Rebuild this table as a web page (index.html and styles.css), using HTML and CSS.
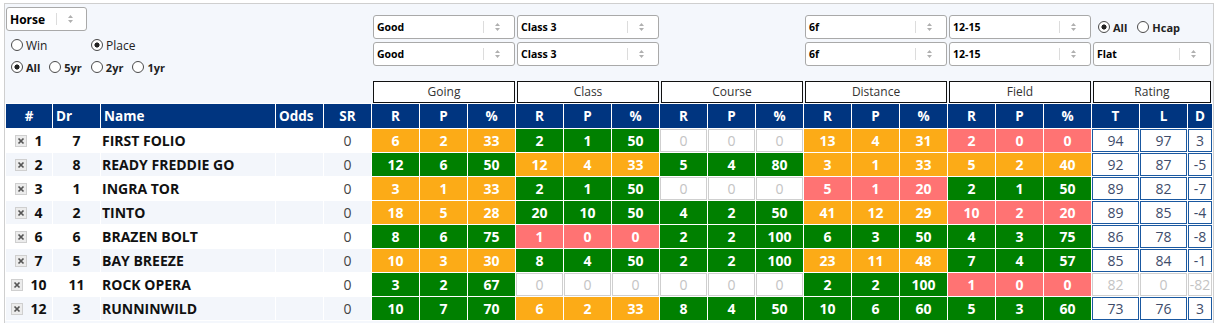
FILE: index.html
```html
<!DOCTYPE html>
<html>
<head>
<meta charset="utf-8">
<link rel="stylesheet" href="styles.css">
</head>
<body>
<div class="panel">
  <div class="top">
    <div class="left">
      <div class="sel sel-horse"><span class="sel-txt">Horse</span><span class="sel-arr"><svg width="7" height="10" viewBox="0 0 7 10"><path d="M1 4 L3.5 1 L6 4Z M1 6 L3.5 9 L6 6Z" fill="#b0b0b0"/></svg></span></div>
      <div class="radrow r1">
        <label class="rad w80"><span class="dot"></span>Win</label>
        <label class="rad"><span class="dot on"></span>Place</label>
      </div>
      <div class="radrow r2">
        <label class="rad"><span class="dot on"></span>All</label>
        <label class="rad"><span class="dot"></span>5yr</label>
        <label class="rad"><span class="dot"></span>2yr</label>
        <label class="rad"><span class="dot"></span>1yr</label>
      </div>
    </div>
    <div class="col">
      <div class="sel"><span class="sel-txt">Good</span><span class="sel-arr"><svg width="7" height="10" viewBox="0 0 7 10"><path d="M1 4 L3.5 1 L6 4Z M1 6 L3.5 9 L6 6Z" fill="#b0b0b0"/></svg></span></div>
      <div class="sel"><span class="sel-txt">Good</span><span class="sel-arr"><svg width="7" height="10" viewBox="0 0 7 10"><path d="M1 4 L3.5 1 L6 4Z M1 6 L3.5 9 L6 6Z" fill="#b0b0b0"/></svg></span></div>
    </div>
    <div class="col">
      <div class="sel"><span class="sel-txt">Class 3</span><span class="sel-arr"><svg width="7" height="10" viewBox="0 0 7 10"><path d="M1 4 L3.5 1 L6 4Z M1 6 L3.5 9 L6 6Z" fill="#b0b0b0"/></svg></span></div>
      <div class="sel"><span class="sel-txt">Class 3</span><span class="sel-arr"><svg width="7" height="10" viewBox="0 0 7 10"><path d="M1 4 L3.5 1 L6 4Z M1 6 L3.5 9 L6 6Z" fill="#b0b0b0"/></svg></span></div>
    </div>
    <div class="col"></div>
    <div class="col">
      <div class="sel"><span class="sel-txt">6f</span><span class="sel-arr"><svg width="7" height="10" viewBox="0 0 7 10"><path d="M1 4 L3.5 1 L6 4Z M1 6 L3.5 9 L6 6Z" fill="#b0b0b0"/></svg></span></div>
      <div class="sel"><span class="sel-txt">6f</span><span class="sel-arr"><svg width="7" height="10" viewBox="0 0 7 10"><path d="M1 4 L3.5 1 L6 4Z M1 6 L3.5 9 L6 6Z" fill="#b0b0b0"/></svg></span></div>
    </div>
    <div class="col">
      <div class="sel"><span class="sel-txt">12-15</span><span class="sel-arr"><svg width="7" height="10" viewBox="0 0 7 10"><path d="M1 4 L3.5 1 L6 4Z M1 6 L3.5 9 L6 6Z" fill="#b0b0b0"/></svg></span></div>
      <div class="sel"><span class="sel-txt">12-15</span><span class="sel-arr"><svg width="7" height="10" viewBox="0 0 7 10"><path d="M1 4 L3.5 1 L6 4Z M1 6 L3.5 9 L6 6Z" fill="#b0b0b0"/></svg></span></div>
    </div>
    <div class="col">
      <div class="radrow rr">
        <label class="rad"><span class="dot on"></span>All</label>
        <label class="rad"><span class="dot"></span>Hcap</label>
      </div>
      <div class="sel"><span class="sel-txt">Flat</span><span class="sel-arr"><svg width="7" height="10" viewBox="0 0 7 10"><path d="M1 4 L3.5 1 L6 4Z M1 6 L3.5 9 L6 6Z" fill="#b0b0b0"/></svg></span></div>
    </div>
  </div>

  <div class="groups">
    <div></div>
    <div class="gbox">Going</div>
    <div class="gbox">Class</div>
    <div class="gbox">Course</div>
    <div class="gbox">Distance</div>
    <div class="gbox">Field</div>
    <div class="gbox">Rating</div>
  </div>

  <table class="grid">
    <colgroup>
      <col class="c-num"><col class="c-dr"><col class="c-name"><col class="c-odds"><col class="c-sr">
      <col class="c-v"><col class="c-v"><col class="c-v">
      <col class="c-v"><col class="c-v"><col class="c-v">
      <col class="c-v"><col class="c-v"><col class="c-v">
      <col class="c-v"><col class="c-v"><col class="c-v">
      <col class="c-v"><col class="c-v"><col class="c-v">
      <col class="c-v"><col class="c-v"><col class="c-d">
    </colgroup>
    <thead>
      <tr class="hd">
        <th class="ctr">#</th><th>Dr</th><th>Name</th><th>Odds</th><th class="ctr">SR</th>
        <th>R</th><th>P</th><th>%</th>
        <th>R</th><th>P</th><th>%</th>
        <th>R</th><th>P</th><th>%</th>
        <th>R</th><th>P</th><th>%</th>
        <th>R</th><th>P</th><th>%</th>
        <th>T</th><th>L</th><th>D</th>
      </tr>
    </thead>
    <tbody>
      <tr>
        <td class="num"><span class="xbox"><svg width="12" height="12" viewBox="0 0 12 12"><rect x="0.5" y="0.5" width="11" height="11" fill="#ececec" stroke="#cfcfcf"/><path d="M3.5 3.5 L8.5 8.5 M8.5 3.5 L3.5 8.5" stroke="#555" stroke-width="1.7"/></svg></span>1</td>
        <td class="dr">7</td><td class="name">FIRST FOLIO</td><td></td><td class="sr">0</td>
        <td class="o">6</td><td class="o">2</td><td class="o">33</td>
        <td class="g">2</td><td class="g">1</td><td class="g">50</td>
        <td class="e">0</td><td class="e">0</td><td class="e">0</td>
        <td class="o">13</td><td class="o">4</td><td class="o">31</td>
        <td class="r">2</td><td class="r">0</td><td class="r">0</td>
        <td class="t">94</td><td class="t">97</td><td class="t">3</td>
      </tr>
      <tr>
        <td class="num"><span class="xbox"><svg width="12" height="12" viewBox="0 0 12 12"><rect x="0.5" y="0.5" width="11" height="11" fill="#ececec" stroke="#cfcfcf"/><path d="M3.5 3.5 L8.5 8.5 M8.5 3.5 L3.5 8.5" stroke="#555" stroke-width="1.7"/></svg></span>2</td>
        <td class="dr">8</td><td class="name">READY FREDDIE GO</td><td></td><td class="sr">0</td>
        <td class="g">12</td><td class="g">6</td><td class="g">50</td>
        <td class="o">12</td><td class="o">4</td><td class="o">33</td>
        <td class="g">5</td><td class="g">4</td><td class="g">80</td>
        <td class="o">3</td><td class="o">1</td><td class="o">33</td>
        <td class="o">5</td><td class="o">2</td><td class="o">40</td>
        <td class="t">92</td><td class="t">87</td><td class="t">-5</td>
      </tr>
      <tr>
        <td class="num"><span class="xbox"><svg width="12" height="12" viewBox="0 0 12 12"><rect x="0.5" y="0.5" width="11" height="11" fill="#ececec" stroke="#cfcfcf"/><path d="M3.5 3.5 L8.5 8.5 M8.5 3.5 L3.5 8.5" stroke="#555" stroke-width="1.7"/></svg></span>3</td>
        <td class="dr">1</td><td class="name">INGRA TOR</td><td></td><td class="sr">0</td>
        <td class="o">3</td><td class="o">1</td><td class="o">33</td>
        <td class="g">2</td><td class="g">1</td><td class="g">50</td>
        <td class="e">0</td><td class="e">0</td><td class="e">0</td>
        <td class="r">5</td><td class="r">1</td><td class="r">20</td>
        <td class="g">2</td><td class="g">1</td><td class="g">50</td>
        <td class="t">89</td><td class="t">82</td><td class="t">-7</td>
      </tr>
      <tr>
        <td class="num"><span class="xbox"><svg width="12" height="12" viewBox="0 0 12 12"><rect x="0.5" y="0.5" width="11" height="11" fill="#ececec" stroke="#cfcfcf"/><path d="M3.5 3.5 L8.5 8.5 M8.5 3.5 L3.5 8.5" stroke="#555" stroke-width="1.7"/></svg></span>4</td>
        <td class="dr">2</td><td class="name">TINTO</td><td></td><td class="sr">0</td>
        <td class="o">18</td><td class="o">5</td><td class="o">28</td>
        <td class="g">20</td><td class="g">10</td><td class="g">50</td>
        <td class="g">4</td><td class="g">2</td><td class="g">50</td>
        <td class="o">41</td><td class="o">12</td><td class="o">29</td>
        <td class="r">10</td><td class="r">2</td><td class="r">20</td>
        <td class="t">89</td><td class="t">85</td><td class="t">-4</td>
      </tr>
      <tr>
        <td class="num"><span class="xbox"><svg width="12" height="12" viewBox="0 0 12 12"><rect x="0.5" y="0.5" width="11" height="11" fill="#ececec" stroke="#cfcfcf"/><path d="M3.5 3.5 L8.5 8.5 M8.5 3.5 L3.5 8.5" stroke="#555" stroke-width="1.7"/></svg></span>6</td>
        <td class="dr">6</td><td class="name">BRAZEN BOLT</td><td></td><td class="sr">0</td>
        <td class="g">8</td><td class="g">6</td><td class="g">75</td>
        <td class="r">1</td><td class="r">0</td><td class="r">0</td>
        <td class="g">2</td><td class="g">2</td><td class="g">100</td>
        <td class="g">6</td><td class="g">3</td><td class="g">50</td>
        <td class="g">4</td><td class="g">3</td><td class="g">75</td>
        <td class="t">86</td><td class="t">78</td><td class="t">-8</td>
      </tr>
      <tr>
        <td class="num"><span class="xbox"><svg width="12" height="12" viewBox="0 0 12 12"><rect x="0.5" y="0.5" width="11" height="11" fill="#ececec" stroke="#cfcfcf"/><path d="M3.5 3.5 L8.5 8.5 M8.5 3.5 L3.5 8.5" stroke="#555" stroke-width="1.7"/></svg></span>7</td>
        <td class="dr">5</td><td class="name">BAY BREEZE</td><td></td><td class="sr">0</td>
        <td class="o">10</td><td class="o">3</td><td class="o">30</td>
        <td class="g">8</td><td class="g">4</td><td class="g">50</td>
        <td class="g">2</td><td class="g">2</td><td class="g">100</td>
        <td class="o">23</td><td class="o">11</td><td class="o">48</td>
        <td class="g">7</td><td class="g">4</td><td class="g">57</td>
        <td class="t">85</td><td class="t">84</td><td class="t">-1</td>
      </tr>
      <tr>
        <td class="num"><span class="xbox"><svg width="12" height="12" viewBox="0 0 12 12"><rect x="0.5" y="0.5" width="11" height="11" fill="#ececec" stroke="#cfcfcf"/><path d="M3.5 3.5 L8.5 8.5 M8.5 3.5 L3.5 8.5" stroke="#555" stroke-width="1.7"/></svg></span>10</td>
        <td class="dr">11</td><td class="name">ROCK OPERA</td><td></td><td class="sr">0</td>
        <td class="g">3</td><td class="g">2</td><td class="g">67</td>
        <td class="e">0</td><td class="e">0</td><td class="e">0</td>
        <td class="e">0</td><td class="e">0</td><td class="e">0</td>
        <td class="g">2</td><td class="g">2</td><td class="g">100</td>
        <td class="r">1</td><td class="r">0</td><td class="r">0</td>
        <td class="tg">82</td><td class="tg">0</td><td class="tg">-82</td>
      </tr>
      <tr>
        <td class="num"><span class="xbox"><svg width="12" height="12" viewBox="0 0 12 12"><rect x="0.5" y="0.5" width="11" height="11" fill="#ececec" stroke="#cfcfcf"/><path d="M3.5 3.5 L8.5 8.5 M8.5 3.5 L3.5 8.5" stroke="#555" stroke-width="1.7"/></svg></span>12</td>
        <td class="dr">3</td><td class="name">RUNNINWILD</td><td></td><td class="sr">0</td>
        <td class="g">10</td><td class="g">7</td><td class="g">70</td>
        <td class="o">6</td><td class="o">2</td><td class="o">33</td>
        <td class="g">8</td><td class="g">4</td><td class="g">50</td>
        <td class="g">10</td><td class="g">6</td><td class="g">60</td>
        <td class="g">5</td><td class="g">3</td><td class="g">60</td>
        <td class="t">73</td><td class="t">76</td><td class="t">3</td>
      </tr>
    </tbody>
  </table>
</div>
</body>
</html>
```

FILE: styles.css
```css
* { box-sizing: border-box; }

html, body {
  margin: 0;
  padding: 0;
  background: #fff;
}

body {
  font-family: "Open Sans", "Noto Sans", sans-serif;
  color: #222;
}

.panel {
  margin: 3px 0 0 4px;
  width: 1210px;
  height: 320px;
  border: 1px solid #cfcfcf;
  border-bottom: none;
  background: #f4f7fc;
  overflow: hidden;
}

/* ---------- top controls ---------- */
.top {
  display: grid;
  grid-template-columns: 366px repeat(5, 142px) 118px;
  column-gap: 2px;
  height: 77px;
}

.left {
  padding: 3px 0 0 1px;
}

.col {
  display: flex;
  flex-direction: column;
  gap: 3px;
  padding-top: 11px;
}

.sel {
  display: flex;
  align-items: center;
  height: 24px;
  border: 1px solid #a9a9a9;
  border-radius: 3px;
  background: #fff;
  color: #000;
  font-size: 10.5px;
  font-weight: 700;
  padding-left: 3px;
}

.sel-horse {
  width: 81px;
  font-size: 12px;
}

.sel-txt {
  flex: 1;
  white-space: nowrap;
}

.sel-arr {
  display: flex;
  align-items: center;
  width: 31px;
  height: 12px;
  border-left: 1px solid #dcdcdc;
  padding-left: 10px;
}

.sel-horse .sel-arr {
  width: 30px;
}

.radrow {
  display: flex;
  align-items: center;
  height: 22px;
  padding-left: 5px;
  gap: 9px;
}

.r1 {
  margin-top: 3px;
  font-size: 12px;
}

.r2 {
  font-size: 11px;
  font-weight: 700;
}

.rr {
  height: 24px;
  font-size: 11px;
  font-weight: 700;
  gap: 10px;
}

.rad {
  display: flex;
  align-items: center;
  color: #222;
}

.w80 {
  width: 71px;
}

.dot {
  width: 12px;
  height: 12px;
  border: 1px solid #4a4a4a;
  border-radius: 50%;
  background: #fff;
  margin-right: 3px;
  flex: none;
}

.dot.on {
  background: radial-gradient(circle, #222 0, #222 2.2px, #fff 2.9px);
}

/* ---------- group headers ---------- */
.groups {
  display: grid;
  grid-template-columns: 366px repeat(5, 142px) 118px;
  column-gap: 2px;
  height: 22px;
}

.gbox {
  border: 1px solid #111;
  background: #fff;
  font-size: 12px;
  color: #333;
  text-align: center;
  line-height: 20px;
}

/* ---------- table ---------- */
.grid {
  width: 1208px;
  table-layout: fixed;
  border-collapse: separate;
  border-spacing: 1px;
  background: #fff;
}

.c-num { width: 46px; }
.c-dr { width: 47px; }
.c-name { width: 174px; }
.c-odds { width: 47px; }
.c-sr { width: 47px; }
.c-v { width: 47px; }
.c-d { width: 24px; }

.grid th,
.grid td {
  padding: 0;
  border: 1px solid transparent;
  white-space: nowrap;
  overflow: hidden;
}

.hd th {
  height: 24px;
  background: #003580;
  border-color: #003580;
  color: #fff;
  font-size: 13.5px;
  font-weight: 700;
  text-align: center;
}

.hd th:nth-child(2),
.hd th:nth-child(3),
.hd th:nth-child(4) {
  text-align: left;
  padding-left: 2px;
}

.grid tbody td {
  height: 23px;
  font-size: 14px;
  text-align: center;
}

.grid tbody tr:nth-child(odd) td {
  background: #fff;
  border-color: #fff;
}

.grid tbody tr:nth-child(even) td {
  background: #f3f6fb;
  border-color: #f3f6fb;
}

.num {
  font-weight: 700;
  color: #111;
}

.xbox {
  display: inline-block;
  vertical-align: -1px;
  margin-right: 7px;
  line-height: 0;
}

.dr {
  font-weight: 700;
  color: #111;
}

.grid tbody td.name {
  text-align: left;
  font-weight: 700;
  color: #111;
}

.sr {
  color: #444;
}

.grid tbody tr td.o {
  background: #fcab17;
  border-color: #fcab17;
  color: #fff;
  font-weight: 700;
}

.grid tbody tr td.g {
  background: #008000;
  border-color: #008000;
  color: #fff;
  font-weight: 700;
}

.grid tbody tr td.r {
  background: #ff7373;
  border-color: #ff7373;
  color: #fff;
  font-weight: 700;
}

.grid tbody tr td.e {
  background: #fff;
  border-color: #cfcfcf;
  color: #c4c4c4;
}

.grid tbody tr td.t {
  background: #fff;
  border-color: #1a58a0;
  color: #3e4c6a;
}

.grid tbody tr td.tg {
  background: #fff;
  border-color: #cfcfcf;
  color: #c4c4c4;
}
```
